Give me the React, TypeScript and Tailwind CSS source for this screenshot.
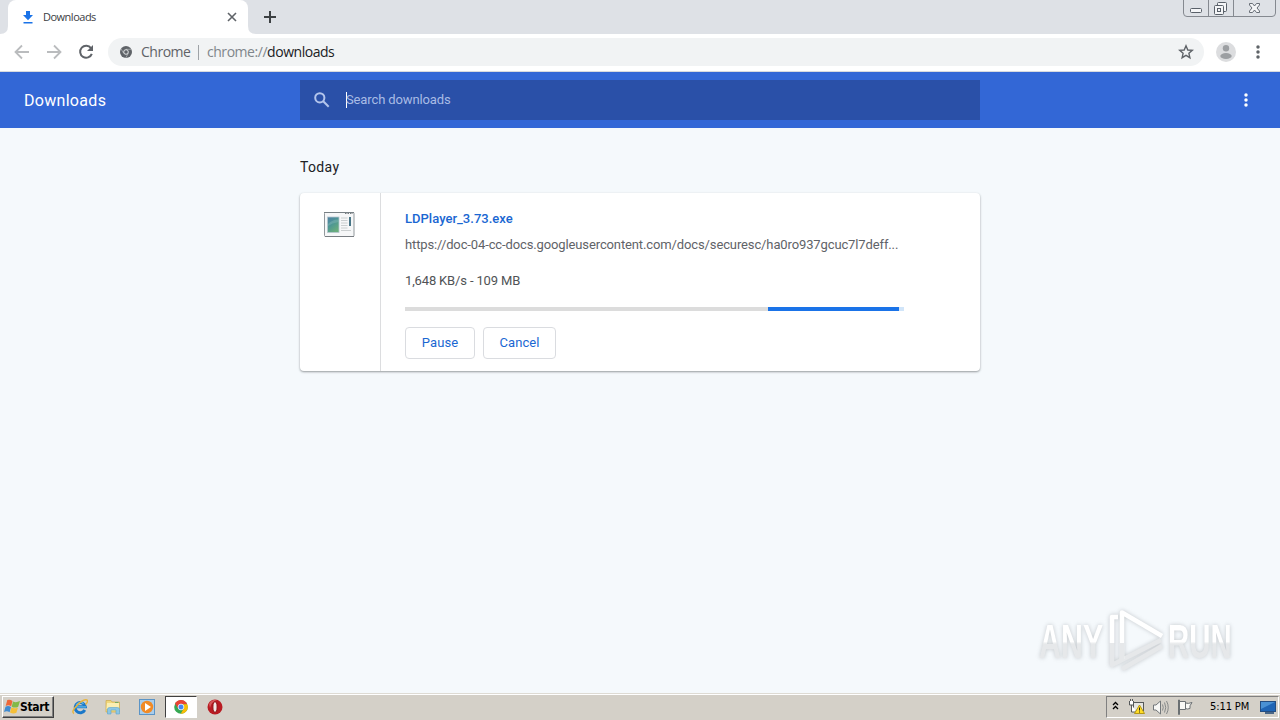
import type { ReactNode } from 'react';

function Dots({ className }: { className: string }) {
  return (
    <svg className={className} viewBox="0 0 4 14" fill="currentColor">
      <circle cx="2" cy="2" r="1.75" />
      <circle cx="2" cy="7" r="1.75" />
      <circle cx="2" cy="12" r="1.75" />
    </svg>
  );
}

function TabStrip() {
  return (
    <div className="flex h-[34px] shrink-0 bg-[#dee1e6]">
      <svg className="h-[34px] w-2" viewBox="0 0 8 34">
        <path d="M0 34Q8 34 8 26V34Z" fill="#fff" />
      </svg>
      <div className="flex h-[34px] w-[240px] items-center rounded-t-[8px] bg-white pr-[10px] pl-[14px]">
        <svg className="h-[13px] w-3" viewBox="0 0 12 13" fill="#1a73e8">
          <path d="M4 0H8V4H11L6 9.2L1 4H4ZM1.5 11H10.5V12.5H1.5Z" />
        </svg>
        <span className="ml-[9px] font-['Open_Sans',sans-serif] text-[11px] tracking-[-0.5px] text-[#3c4043]">Downloads</span>
        <svg className="ml-auto h-3 w-3" viewBox="0 0 12 12" stroke="#5f6368" strokeWidth="1.6">
          <path d="M2 2L10 10M10 2L2 10" />
        </svg>
      </div>
      <svg className="h-[34px] w-2" viewBox="0 0 8 34">
        <path d="M0 26Q0 34 8 34H0Z" fill="#fff" />
      </svg>
      <svg className="mt-[11px] ml-2 h-3 w-3" viewBox="0 0 12 12" stroke="#3c4043" strokeWidth="2">
        <path d="M6 0V12M0 6H12" />
      </svg>
      <svg className="ml-auto h-[18px] w-[93px]" viewBox="0 0 93 18" fill="none" stroke="#858990">
        <path d="M.5 0V13Q.5 16.5 4 16.5H89Q92.500 16.500 92.500 13V0M25.500 0V16.500M50.500 0V16.500" />
        <g stroke="#596069">
          <rect x="7.500" y="8.500" width="11" height="4" rx="1" fill="#f4f5f7" />
          <rect x="34.500" y="2.500" width="9" height="9" rx="1" fill="#f4f5f7" />
          <rect x="31.500" y="5.500" width="9" height="9" rx="1" fill="#f4f5f7" />
          <rect x="34.500" y="8.500" width="3" height="3" />
          <path d="M66.500 3.500H69.500L71.500 6L73.500 3.500H76.500V5L74 8L76.500 11V12.500H73.500L71.500 10L69.500 12.500H66.500V11L69 8L66.500 5Z" fill="#f4f5f7" strokeWidth=".9" />
        </g>
      </svg>
      <div className="w-1" />
    </div>
  );
}

function Toolbar() {
  return (
    <div className="flex h-[38px] shrink-0 items-center border-b border-[#d8dade] bg-white pb-px">
      <svg className="ml-[14px] h-4 w-4" viewBox="0 0 16 16" fill="none" stroke="#babcbe" strokeWidth="1.8">
        <path d="M15 8H2M8 1.500L1.500 8L8 14.500" />
      </svg>
      <svg className="ml-4 h-4 w-4" viewBox="0 0 16 16" fill="none" stroke="#babcbe" strokeWidth="1.8">
        <path d="M1 8H14M8 1.500L14.500 8L8 14.500" />
      </svg>
      <svg className="ml-4 h-4 w-4" viewBox="0 0 16 16" fill="none" stroke="#5f6368" strokeWidth="2">
        <path d="M13 4.200A6 6 0 1 0 13.800 9.800" />
        <path d="M15 1V7H9Z" fill="#5f6368" stroke="none" />
      </svg>
      <div className="ml-[14px] flex h-7 w-[1096px] items-center rounded-full bg-[#f1f3f4] pr-[10px] pl-3">
        <svg className="h-3 w-3" viewBox="0 0 12 12">
          <circle cx="6" cy="6" r="6" fill="#5f6368" />
          <path d="M6 3.300H11.200M3.700 7.300L1 2.800M8.300 7.300L5.700 12" stroke="#c6c9cc" strokeWidth=".6" />
          <circle cx="6" cy="6" r="2.300" fill="#5f6368" stroke="#f1f3f4" strokeWidth=".9" />
        </svg>
        <div className="ml-[9px] flex items-center font-['Open_Sans',sans-serif] text-[14px] leading-5 whitespace-pre text-[#5f6368]">
          <span className="w-[49px] tracking-[-0.5px]">Chrome</span>
          <span className="mx-2 h-[15px] w-px bg-[#9fa3a7]" />
          <span className="tracking-[-0.46px] text-[#80868b]">chrome://<span className="text-[#202124]">downloads</span></span>
        </div>
        <svg className="ml-auto h-4 w-4" viewBox="0 0 16 16" fill="none" stroke="#5f6368" strokeWidth="1.400">
          <path d="M8 1.800L9.800 6L14.300 6.400L10.900 9.300L11.900 13.700L8 11.400L4.100 13.700L5.100 9.300L1.700 6.400L6.200 6Z" />
        </svg>
      </div>
      <svg className="ml-3 h-5 w-5" viewBox="0 0 20 20">
        <circle cx="10" cy="10" r="10" fill="#dcdddf" />
        <g fill="#9c9fa2">
          <circle cx="10" cy="6.300" r="3.200" />
          <ellipse cx="10" cy="14" rx="5.700" ry="3" />
        </g>
      </svg>
      <Dots className="ml-5 h-[14px] w-1 text-[#5f6368]" />
    </div>
  );
}

function PageHeader() {
  return (
    <header className="flex h-14 shrink-0 items-center bg-[#3367d6] font-[Roboto,sans-serif]">
      <h1 className="w-[300px] pt-[2px] pl-6 text-[16px] tracking-[0.3px] text-white">Downloads</h1>
      <div className="flex h-10 w-[680px] items-center bg-[#2a50a8] pl-[14px]">
        <svg className="h-4 w-4" viewBox="0 0 16 16" fill="none" stroke="#b3c5ec" strokeWidth="2">
          <circle cx="5.800" cy="5.800" r="4.600" />
          <path d="M9 9L14.700 14.700" />
        </svg>
        <span className="ml-4 h-4 w-px bg-white" />
        <span className="-ml-px text-[13px] tracking-[-0.12px] text-[#a9bce5]">Search downloads</span>
      </div>
      <Dots className="ml-[264px] h-[14px] w-1 text-white" />
    </header>
  );
}

function ActionButton({ children, className }: { children: ReactNode; className: string }) {
  return (
    <button className={`h-8 rounded-[4px] border border-[#dadce0] text-[13px] tracking-[0.1px] text-[#1a67d2] ${className}`}>
      {children}
    </button>
  );
}

function DownloadCard() {
  return (
    <article className="mt-[17px] flex h-[178px] w-[680px] rounded-[4px] bg-white shadow-[0_1px_2px_rgba(60,64,67,0.4),0_1px_3px_rgba(60,64,67,0.15)]">
      <div className="flex w-[81px] justify-center border-r border-[#dcdddf] pt-[18px] pr-[2px]">
        <svg className="h-[27px] w-8" viewBox="0 0 32 27">
          <defs>
            <linearGradient id="pane" x1="0" y1="0" x2=".6" y2="1">
              <stop stopColor="#4f7ea5" />
              <stop offset=".5" stopColor="#4d9694" />
              <stop offset="1" stopColor="#6aad7c" />
            </linearGradient>
          </defs>
          <rect x="1.500" y="1.500" width="29.500" height="24" rx="1" fill="#f6f7f8" stroke="#92989c" />
          <path d="M1 1.500H31" stroke="#788085" />
          <path d="M22 2.500H30" stroke="#777d81" strokeDasharray="1.500 1" />
          <rect x="4.500" y="6" width="11.500" height="15.500" fill="url(#pane)" stroke="#b6c7cf" strokeWidth=".8" />
          <path d="M5 13Q10 8 15.500 8.500V11Q9 12 5 15Z" fill="#a2c9c6" opacity=".3" />
          <path d="M18 7H24.500M18 9.500H24.500M18 12H24.500M18 14.500H24.500M18 17H24.500M18 19.500H28" stroke="#c6c9cb" strokeWidth=".9" />
          <rect x="26" y="6" width="2" height="9" fill="#487586" />
          <path d="M2 25.500H31" stroke="#787d82" />
        </svg>
      </div>
      <div className="w-[523px] pt-[17px] pl-6">
        <h3 className="h-[17px] text-[13px] leading-[17px] font-medium tracking-[0.02px] text-[#1a67d2]">LDPlayer_3.73.exe</h3>
        <p className="mt-[9px] h-[17px] text-[13px] leading-[17px] tracking-[-0.122px] whitespace-nowrap text-[#5f6368]">https://doc-04-cc-docs.googleusercontent.com/docs/securesc/ha0ro937gcuc7l7deff...</p>
        <p className="mt-[19px] h-[17px] text-[13px] leading-[17px] tracking-[-0.15px] text-[#505356]">1,648 KB/s - 109 MB</p>
        <div className="mt-[18px] flex h-1 bg-[#dcdcdc]">
          <div className="ml-[363px] w-[131px] bg-[#1a73e8]" />
          <div className="w-[5px] bg-[#d1e5f9]" />
        </div>
        <div className="mt-4 flex gap-2">
          <ActionButton className="w-[70px]">Pause</ActionButton>
          <ActionButton className="w-[73px]">Cancel</ActionButton>
        </div>
      </div>
    </article>
  );
}

function Watermark() {
  return (
    <div className="absolute top-[608px] left-[1039px] flex h-[64px] w-[200px] items-center font-['Liberation_Sans',sans-serif] text-[49px] leading-none font-bold drop-shadow-[0_0_2px_rgba(120,125,130,0.4)]">
      <div className="flex h-[64px] w-[65px] shrink-0 items-center pt-[2px]">
        <span className="origin-left scale-x-[0.62] bg-linear-to-b from-white from-50% to-[#e6e8ea] to-55% bg-clip-text text-transparent">ANY</span>
      </div>
      <svg className="h-[64px] w-[64px] shrink-0" viewBox="0 0 64 64" fill="none" strokeWidth="4.5" strokeLinejoin="round">
        <path d="M14 9H8V57L57 32" stroke="#e6e8ea" />
        <path d="M18 61L58 38" stroke="#e6e8ea" />
        <path d="M14 9H8V35M18 51V4.500L58 28" stroke="#fff" />
        <path d="M18 35V51" stroke="#e6e8ea" />
      </svg>
      <div className="flex h-[64px] w-[68px] shrink-0 items-center pt-[2px]">
        <span className="origin-left scale-x-[0.6] bg-linear-to-b from-white from-50% to-[#e6e8ea] to-55% bg-clip-text text-transparent">RUN</span>
      </div>
    </div>
  );
}

function Taskbar() {
  return (
    <footer className="flex h-[27px] shrink-0 items-center border-t border-[#dedbd4] bg-[#d4d0c8] font-['DejaVu_Sans_Condensed','DejaVu_Sans',sans-serif] shadow-[inset_0_1px_0_#fff]">
      <button className="ml-[2px] flex h-[22px] w-[52px] items-center border border-t-white border-r-[#404040] border-b-[#404040] border-l-white pl-px shadow-[inset_-1px_-1px_0_#808080]">
        <svg className="h-4 w-4 shrink-0" viewBox="0 0 16 16">
          <path d="M3.300 1Q6 0 8.500 2L7.200 7.300Q4.500 5.500 1.700 7Z" fill="#ed6738" />
          <path d="M9 2.500Q12 4 16 2L14.200 7.700Q11 9.500 7.700 7.700Z" fill="#82b948" />
          <path d="M1.500 7.700Q4.300 6.200 7 8L5.600 13.200Q3 11.500 0 13Z" fill="#408bd0" />
          <path d="M7.500 8.300Q10.500 10.200 14 8.400L12.400 13.800Q9.500 15.500 6 13.600Z" fill="#f5bf38" />
        </svg>
        <span className="text-[12px] font-bold tracking-[-0.35px] text-black">Start</span>
      </button>
      <svg className="ml-[18px] h-4 w-4" viewBox="0 0 16 16" fill="none">
        <path d="M12.800 11A5.100 5.100 0 1 1 13.300 7.800H4" stroke="#1b78c9" strokeWidth="3" />
        <path d="M4 7.800H14M4.200 6A4.600 4.600 0 0 1 11.500 4.700" stroke="#5cb8ea" strokeWidth="1.200" />
        <path d="M2 14.500Q-1 13 4 7.500Q11-.5 15 1Q16.500 2.500 13.500 5.500" stroke="#e8b43b" strokeWidth="1.400" />
      </svg>
      <svg className="ml-[17px] h-4 w-4" viewBox="0 0 16 16">
        <path d="M1 1.500H6L7 3H14.500V13H1Z" fill="#f0d77c" stroke="#cda94c" strokeWidth=".7" />
        <path d="M2 4H14V10H1.500Z" fill="#faeeb2" />
        <path d="M10 3.500H13.500" stroke="#77aa62" />
        <path d="M2.500 15V10Q2.500 8.500 5 8.500H12Q14.500 8.500 14.500 10V15H11V11H6V15Z" fill="#8cc6e4" stroke="#5ba5ce" strokeWidth=".6" />
      </svg>
      <svg className="ml-[18px] h-4 w-4" viewBox="0 0 16 16">
        <rect x=".5" y=".5" width="15" height="15" fill="#a9cdeb" stroke="#5b94c6" />
        <circle cx="8" cy="8" r="6.200" fill="#f18a25" />
        <path d="M6 4L12 8L6 12Z" fill="#fff" />
      </svg>
      <div className="ml-[10px] flex h-[22px] w-[32px] items-center justify-center border border-t-[#404040] border-r-white border-b-white border-l-[#404040] bg-white">
        <svg className="h-[14px] w-[14px]" viewBox="0 0 14 14">
          <circle cx="7" cy="7" r="6.800" fill="#35a853" />
          <path d="M1 3.600A6.800 6.800 0 0 1 13.200 4.200H7L4 8.300Z" fill="#e94335" />
          <path d="M13.200 4.200A6.800 6.800 0 0 1 6.700 13.800L10 8L8.500 4.200Z" fill="#fbbc05" />
          <circle cx="7" cy="7" r="2.900" fill="#4285f4" stroke="#fff" strokeWidth=".8" />
        </svg>
      </div>
      <svg className="ml-[10px] h-4 w-4" viewBox="0 0 16 16">
        <circle cx="8" cy="8" r="7.500" fill="#b91b22" />
        <path d="M2 5Q5 0 10 1Q4 3 3 9Z" fill="#e57a78" opacity=".65" />
        <ellipse cx="8" cy="8" rx="2.100" ry="5.300" fill="#f3e9e5" stroke="#8e1014" />
      </svg>
      <div className="ml-auto flex h-[22px] w-[173px] items-center border border-t-[#808080] border-r-white border-b-white border-l-[#808080] pl-[5px]">
        <svg className="h-3 w-[7px]" viewBox="0 0 7 12" fill="none" stroke="#000" strokeWidth="1.300">
          <path d="M1 4L3.500 1.500L6 4M1 8L3.500 5.500L6 8" />
        </svg>
        <svg className="ml-[9px] h-4 w-[17px]" viewBox="0 0 17 16" fill="none" stroke="#55585a">
          <rect x="5.500" y="3.500" width="10" height="8" fill="#e5e5e1" />
          <path d="M1.500 2V6H5.500V2M2.500 0V2M4.500 0V2M3.500 6V13H9" fill="#fff" />
          <path d="M11.500 6L16.500 14.500H6.500Z" fill="#ffdc27" stroke="#b59816" />
          <path d="M11.500 8.500V11.500M11.500 12.500V13.500" stroke="#222" />
        </svg>
        <svg className="ml-2 h-[17px] w-4" viewBox="0 0 16 17" fill="none" stroke="#72777a">
          <path d="M.5 6V11H3L7.500 15V2L3 6Z" fill="#f7f7f5" />
          <path d="M9.500 5.500Q11 8.500 9.500 11.500M11.500 3.500Q14 8.500 11.500 13.500M13.500 2Q17 8.500 13.500 15" strokeWidth=".8" />
        </svg>
        <svg className="ml-2 h-4 w-4" viewBox="0 0 16 16" fill="#f8f8f5" stroke="#6b7073">
          <path d="M1.500 1V15.500H2.500V1ZM3 2.500H8.500V10.500H3M8.500 4Q11 5 15 3.500Q12 7 13 9.500Q10 10.500 8.500 9.500" />
        </svg>
        <span className="ml-[17px] w-[40px] text-[11px] tracking-[-0.1px] whitespace-nowrap text-black">5:11 PM</span>
        <svg className="ml-[10px] h-[13px] w-4" viewBox="0 0 16 13">
          <rect x=".5" y=".5" width="15" height="10" fill="#2065b5" stroke="#244d81" />
          <path d="M1 1H15L1 8Z" fill="#4a91d4" />
          <path d="M5 12H14" stroke="#1d4371" strokeWidth="1.500" />
        </svg>
      </div>
      <div className="w-px" />
    </footer>
  );
}

export default function App() {
  return (
    <div className="relative flex h-[720px] w-[1280px] flex-col overflow-hidden bg-[#f5f9fc]">
      <TabStrip />
      <Toolbar />
      <PageHeader />
      <main className="flex grow flex-col px-[300px] pt-[30px] font-[Roboto,sans-serif]">
        <h2 className="h-[18px] text-[14px] leading-[18px] tracking-[0.35px] text-[#202124]">Today</h2>
        <DownloadCard />
      </main>
      <Taskbar />
      <Watermark />
    </div>
  );
}
